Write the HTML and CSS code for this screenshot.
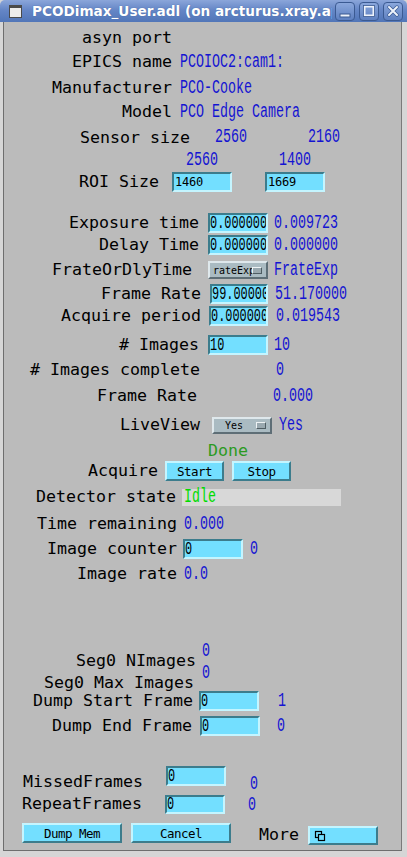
FILE: index.html
```html
<!DOCTYPE html>
<html>
<head>
<meta charset="utf-8">
<link rel="stylesheet" href="styles.css">
</head>
<body>
<div class="win">
  <div class="titlebar">
    <span class="ticon"></span>
    <span class="ttext">PCODimax_User.adl (on arcturus.xray.aps.anl.gov)</span>
    <div class="tbtns">
      <span class="tbtn"><svg width="14" height="14" viewBox="0 0 14 14"><rect x="2" y="10" width="10" height="3" fill="#eef3fb" stroke="#3b5a92" stroke-width="1"/></svg></span>
      <span class="tbtn"><svg width="14" height="14" viewBox="0 0 14 14"><rect x="2.5" y="2.5" width="9" height="9" fill="none" stroke="#eef3fb" stroke-width="2"/><rect x="1.5" y="1.5" width="11" height="11" fill="none" stroke="#3b5a92" stroke-width="0.8"/></svg></span>
      <span class="tbtn"><svg width="14" height="14" viewBox="0 0 14 14"><path d="M3 3 L11 11 M11 3 L3 11" stroke="#3b5a92" stroke-width="3.4" stroke-linecap="round"/><path d="M3 3 L11 11 M11 3 L3 11" stroke="#eef3fb" stroke-width="2" stroke-linecap="round"/></svg></span>
    </div>
  </div>
  <div class="content">
    <div class="row r1"><span class="lbl">asyn port</span></div>
    <div class="row r2"><span class="lbl">EPICS name</span><span class="val">PCOIOC2:cam1:</span></div>
    <div class="row r3"><span class="lbl">Manufacturer</span><span class="val">PCO-Cooke</span></div>
    <div class="row r4"><span class="lbl">Model</span><span class="val">PCO Edge Camera</span></div>
    <div class="row r5"><span class="lbl">Sensor size</span><span class="cell w93"><span class="val">2560</span></span><span class="val">2160</span></div>
    <div class="row r6"><span class="cell w93"><span class="val">2560</span></span><span class="val">1400</span></div>
    <div class="row r7"><span class="lbl">ROI Size</span><span class="inp sans">1460</span><span class="inp sans">1669</span></div>
    <div class="row r8"><span class="lbl">Exposure time</span><span class="inp"><span class="itxt">0.000000</span></span><span class="val">0.009723</span></div>
    <div class="row r9"><span class="lbl">Delay Time</span><span class="inp"><span class="itxt">0.000000</span></span><span class="val">0.000000</span></div>
    <div class="row r10"><span class="lbl">FrateOrDlyTime</span><span class="menu"><span class="mtxt">rateExp</span><span class="mind"></span></span><span class="val">FrateExp</span></div>
    <div class="row r11"><span class="lbl">Frame Rate</span><span class="inp"><span class="itxt">99.000000</span></span><span class="val">51.170000</span></div>
    <div class="row r12"><span class="lbl">Acquire period</span><span class="inp"><span class="itxt">0.000000</span></span><span class="val">0.019543</span></div>
    <div class="row r13"><span class="lbl"># Images</span><span class="inp"><span class="itxt">10</span></span><span class="val">10</span></div>
    <div class="row r14"><span class="lbl"># Images complete</span><span class="val">0</span></div>
    <div class="row r15"><span class="lbl">Frame Rate</span><span class="val">0.000</span></div>
    <div class="row r16"><span class="lbl">LiveView</span><span class="menu"><span class="mtxt yes">Yes</span><span class="mind"></span></span><span class="val">Yes</span></div>
    <div class="row r17"><span class="lbl done">Done</span></div>
    <div class="row r18"><span class="lbl">Acquire</span><span class="btn">Start</span><span class="btn">Stop</span></div>
    <div class="row r19"><span class="lbl">Detector state</span><span class="field"><span class="val idle">Idle</span></span></div>
    <div class="row r20"><span class="lbl">Time remaining</span><span class="val">0.000</span></div>
    <div class="row r21"><span class="lbl">Image counter</span><span class="inp"><span class="itxt">0</span></span><span class="val">0</span></div>
    <div class="row r22"><span class="lbl">Image rate</span><span class="val">0.0</span></div>
    <div class="row r23"><span class="lbl">Seg0 NImages</span><span class="val up">0</span></div>
    <div class="row r24"><span class="lbl">Seg0 Max Images</span><span class="val up">0</span></div>
    <div class="row r25"><span class="lbl">Dump Start Frame</span><span class="inp"><span class="itxt">0</span></span><span class="val">1</span></div>
    <div class="row r26"><span class="lbl">Dump End Frame</span><span class="inp"><span class="itxt">0</span></span><span class="val">0</span></div>
    <div class="row r27"><span class="lbl">MissedFrames</span><span class="inp"><span class="itxt">0</span></span><span class="val">0</span></div>
    <div class="row r28"><span class="lbl">RepeatFrames</span><span class="inp"><span class="itxt">0</span></span><span class="val">0</span></div>
    <div class="row r29"><span class="btn wide">Dump Mem</span><span class="btn wide">Cancel</span><span class="lbl more">More</span><span class="btn morebtn"><svg width="12" height="12" viewBox="0 0 12 12"><rect x="1.5" y="1.5" width="6" height="6" fill="none" stroke="#000" stroke-width="1.2"/><rect x="4.5" y="4.5" width="6" height="6" fill="#73dfff" stroke="#000" stroke-width="1.2"/></svg></span></div>
  </div>
</div>
</body>
</html>
```
FILE: styles.css
```css
body {
  margin: 0;
  background: #d6d6d6;
}

.win {
  width: 407px;
  height: 857px;
  display: flex;
  flex-direction: column;
  background: #d6d6d6;
  overflow: hidden;
}

.titlebar {
  height: 22px;
  flex: none;
  display: flex;
  align-items: center;
  background: linear-gradient(#8ba6da, #6586c6 45%, #5176b8);
  border-radius: 5px 5px 0 0;
}

.ticon {
  flex: none;
  width: 11px;
  height: 9px;
  margin-left: 9px;
  background: #ececec;
  border: 1px solid #4a4a4a;
  border-top-width: 3px;
}

.ttext {
  flex: 1;
  min-width: 0;
  margin-left: 10px;
  overflow: hidden;
  white-space: nowrap;
  color: #fff;
  font-family: "DejaVu Sans", sans-serif;
  font-weight: bold;
  font-size: 13.6px;
  text-shadow: 0 0 1px #3c5c98;
}

.tbtns {
  flex: none;
  display: flex;
  gap: 4px;
  margin-left: 3px;
  margin-right: 4px;
}

.tbtn {
  width: 18px;
  height: 17px;
  border: 1px solid #3b5a92;
  border-radius: 4px;
  background: linear-gradient(#8aa7dc, #5e80c0);
  display: flex;
  align-items: center;
  justify-content: center;
}

.content {
  width: 397px;
  height: 828px;
  margin-left: 3px;
  border-left: 1px solid #6e6e6e;
  border-right: 1px solid #7a7a7a;
  border-bottom: 1px solid #6e6e6e;
  background: #bbbbbb;
}

.row {
  display: flex;
  align-items: center;
  height: 20px;
}

.lbl {
  flex: none;
  font-family: "DejaVu Sans Mono", monospace;
  font-size: 16.61px;
  line-height: 20px;
  color: #000;
  white-space: pre;
}

.val {
  flex: none;
  display: inline-block;
  font-family: "Liberation Mono", monospace;
  font-size: 19.5px;
  line-height: 20px;
  color: #1414d2;
  white-space: pre;
  transform: scaleX(0.684);
  transform-origin: left center;
}

.cell {
  flex: none;
  display: flex;
}

.w93 { width: 93px; }

.inp {
  flex: none;
  box-sizing: border-box;
  width: 60px;
  height: 20px;
  background: #73dfff;
  border: 2px solid;
  border-color: #3c7c8c #c4f5ff #c4f5ff #3c7c8c;
  overflow: hidden;
  display: flex;
  align-items: center;
  padding-left: 0;
}

.inp.sans {
  font-family: "DejaVu Sans Mono", monospace;
  font-size: 12px;
  letter-spacing: -0.2px;
  color: #000;
  padding-left: 1px;
}

.itxt {
  display: inline-block;
  font-family: "Liberation Mono", monospace;
  font-size: 18px;
  line-height: 16px;
  color: #000;
  white-space: pre;
  transform: scaleX(0.66);
  transform-origin: left center;
}

.menu {
  flex: none;
  box-sizing: border-box;
  width: 60px;
  height: 18px;
  background: #aabbc2;
  border: 2px solid;
  border-color: #dfe8ec #5e6e76 #5e6e76 #dfe8ec;
  display: flex;
  align-items: center;
  justify-content: space-between;
  padding: 0 4px 0 3px;
  overflow: hidden;
}

.mtxt {
  font-family: "DejaVu Sans Mono", monospace;
  font-size: 10px;
  color: #000;
  white-space: pre;
  overflow: hidden;
  width: 40px;
}

.mtxt.yes {
  padding-left: 8px;
  width: 30px;
}

.mind {
  flex: none;
  box-sizing: border-box;
  width: 10px;
  height: 7px;
  background: #9aa9b0;
  border: 1px solid;
  border-color: #eef3f5 #4f5d63 #4f5d63 #eef3f5;
}

.btn {
  flex: none;
  box-sizing: border-box;
  width: 59px;
  height: 20px;
  background: #73dfff;
  border: 2px solid;
  border-color: #c4f5ff #3c7c8c #3c7c8c #c4f5ff;
  display: flex;
  align-items: center;
  justify-content: center;
  font-family: "DejaVu Sans Mono", monospace;
  font-size: 12.5px;
  letter-spacing: -0.5px;
  color: #000;
  white-space: pre;
}

.btn.wide { width: 100px; }

.btn.morebtn {
  width: 70px;
  height: 19px;
  justify-content: flex-start;
  padding-left: 4px;
  align-self: flex-end;
}

.field {
  flex: none;
  width: 159px;
  height: 17px;
  background: #d8d8d8;
  display: flex;
  align-items: center;
  padding-left: 2px;
  box-sizing: border-box;
}

.val.idle { color: #00dc00; }
.done { color: #2b9a1f; }
.val.up { align-self: flex-start; margin-top: -12px; }

/* rows: vertical rhythm and horizontal placement */
.r1 { margin-top: 6px; padding-left: 78px; }
.r2 { margin-top: 4px; padding-left: 68px; }
.r2 .val, .r3 .val, .r4 .val { margin-left: 8px; }
.r3 { margin-top: 6px; padding-left: 48px; }
.r4 { margin-top: 4px; padding-left: 118px; }
.r5 { margin-top: 6px; padding-left: 76px; }
.r5 .cell { margin-left: 25px; }
.r5 .val { margin-bottom: 3px; }
.r6 { margin-top: 2px; padding-left: 182px; }
.r7 { margin-top: 2px; padding-left: 75px; }
.r7 .inp { margin-left: 13px; }
.r7 .inp + .inp { margin-left: 33px; }
.r8 { margin-top: 21px; padding-left: 65px; }
.r8 .inp, .r9 .inp, .r13 .inp { margin-left: 9px; }
.r8 .val, .r9 .val, .r13 .val { margin-left: 6px; }
.r9 { margin-top: 2px; padding-left: 95px; }
.r10 { margin-top: 5px; padding-left: 48px; }
.r10 .menu { margin-left: 16px; }
.r10 .val { margin-left: 6px; }
.r11 { margin-top: 4px; padding-left: 97px; }
.r11 .inp { margin-left: 9px; width: 58px; }
.r11 .val { margin-left: 7px; }
.r12 { margin-top: 2px; padding-left: 57px; }
.r12 .inp { margin-left: 8px; width: 59px; }
.r12 .val { margin-left: 8px; }
.r13 { margin-top: 9px; padding-left: 115px; }
.r14 { margin-top: 5px; padding-left: 26px; }
.r14 .val { margin-left: 76px; }
.r15 { margin-top: 6px; padding-left: 93px; }
.r15 .val { margin-left: 76px; }
.r16 { margin-top: 9px; padding-left: 116px; }
.r16 .menu { margin-left: 12px; height: 17px; }
.r16 .val { margin-left: 7px; }
.r17 { margin-top: 6px; padding-left: 204px; }
.r18 { margin-top: 0; padding-left: 84px; }
.r18 .btn { margin-left: 7px; }
.r18 .btn + .btn { margin-left: 8px; }
.r19 { margin-top: 6px; padding-left: 32px; }
.r19 .field { margin-left: 6px; }
.r19 .val { margin-left: 0; }
.r20 { margin-top: 7px; padding-left: 33px; }
.r20 .val, .r22 .val { margin-left: 7px; }
.r21 { margin-top: 5px; padding-left: 43px; }
.r21 .inp { margin-left: 6px; }
.r21 .val { margin-left: 7px; }
.r22 { margin-top: 5px; padding-left: 73px; }
.r23 { margin-top: 69px; height: 16px; padding-left: 72px; }
.r23 .val { margin-left: 6px; }
.r24 { margin-top: 6px; height: 16px; padding-left: 40px; }
.r24 .val { margin-left: 8px; }
.r25 { margin-top: 0; padding-left: 29px; }
.r25 .inp { margin-left: 6px; }
.r25 .val { margin-left: 19px; }
.r26 { margin-top: 5px; padding-left: 48px; }
.r26 .inp { margin-left: 8px; }
.r26 .val { margin-left: 17px; }
.r27 { margin-top: 30px; height: 26px; padding-left: 19px; }
.r27 .lbl { align-self: flex-end; }
.r27 .inp { align-self: flex-start; margin-left: 23px; }
.r27 .val { align-self: flex-end; margin-left: 24px; margin-bottom: -2px; }
.r28 { margin-top: 2px; padding-left: 18px; }
.r28 .inp { margin-left: 23px; height: 19px; }
.r28 .val { margin-left: 23px; margin-top: 2px; }
.r29 { margin-top: 9px; height: 22px; padding-left: 18px; }
.r29 .btn.wide { align-self: flex-start; }
.r29 .btn.wide + .btn.wide { margin-left: 9px; }
.r29 .more { margin-left: 28px; margin-top: 2px; }
.r29 .morebtn { margin-left: 9px; }
```
